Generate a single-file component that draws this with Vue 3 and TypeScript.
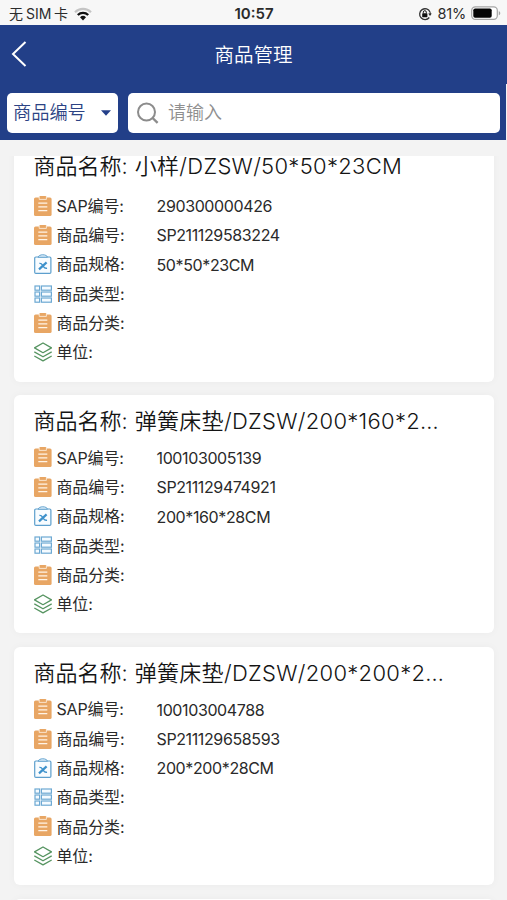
<script setup lang="ts">
import { ref } from 'vue'

type IconKind = 'clipboard' | 'spec' | 'grid' | 'layers'

interface Row {
  icon: IconKind
  label: string
  value: string
}

interface Product {
  name: string
  rows: Row[]
}

function makeProduct(name: string, sap: string, code: string, spec: string): Product {
  return {
    name,
    rows: [
      { icon: 'clipboard', label: 'SAP编号:', value: sap },
      { icon: 'clipboard', label: '商品编号:', value: code },
      { icon: 'spec', label: '商品规格:', value: spec },
      { icon: 'grid', label: '商品类型:', value: '' },
      { icon: 'clipboard', label: '商品分类:', value: '' },
      { icon: 'layers', label: '单位:', value: '' },
    ],
  }
}

const keyword = ref('')

const products: Product[] = [
  makeProduct('小样/DZSW/50*50*23CM', '290300000426', 'SP211129583224', '50*50*23CM'),
  makeProduct('弹簧床垫/DZSW/200*160*2…', '100103005139', 'SP211129474921', '200*160*28CM'),
  makeProduct('弹簧床垫/DZSW/200*200*2…', '100103004788', 'SP211129658593', '200*200*28CM'),
]
</script>

<template>
  <div class="phone">
    <div class="status">
      <div class="side">
        <span class="carrier">无<span class="sim">SIM</span>卡</span>
        <svg class="wifi" width="18" height="14" viewBox="0 0 18 14">
          <path d="M1 5.2a11.5 11.5 0 0 1 16 0" fill="none" stroke="#c4c4c4" stroke-width="2.2" />
          <path d="M3.8 8a7.4 7.4 0 0 1 10.4 0" fill="none" stroke="#111" stroke-width="2.3" />
          <path d="M6 10.3a4.3 4.3 0 0 1 6 0L9 13.4z" fill="#111" />
        </svg>
      </div>
      <span class="clock">10:57</span>
      <div class="side right">
        <svg width="14" height="14" viewBox="0 0 14 14">
          <path d="M11.3 10.5A5.4 5.4 0 1 1 12 5M12.2 5.2v2.6" fill="none" stroke="#333" stroke-width="1.3" />
          <path d="M10.2 6.6h3.6l-1.8 2.4z" fill="#333" />
          <rect x="4.2" y="6.3" width="5.2" height="3.9" rx=".6" fill="#111" />
          <path d="M5.3 6.4V5.2a1.5 1.5 0 0 1 3 0v1.2" fill="none" stroke="#111" stroke-width="1" />
        </svg>
        <span class="percent">81%</span>
        <svg width="30" height="15" viewBox="0 0 30 15">
          <rect x=".7" y=".8" width="25.6" height="12.6" rx="3.6" fill="#fff" stroke="#a5a5a5" stroke-width="1.2" />
          <rect x="2.3" y="2.4" width="18.4" height="9.4" rx="1.8" fill="#050505" />
          <path d="M27.8 5c2 .8 2 3.5 0 4.3z" fill="#a5a5a5" />
        </svg>
      </div>
    </div>

    <header class="nav">
      <svg class="back" width="16" height="26" viewBox="0 0 16 26">
        <path d="M14.5 1L2 13l12.5 12" fill="none" stroke="#fff" stroke-width="2" />
      </svg>
      <h1>商品管理</h1>
    </header>

    <div class="search">
      <div class="select">
        <span>商品编号</span>
        <svg width="10" height="6" viewBox="0 0 10 6"><path d="M0 .3h10L5 5.7z" fill="#24408a" /></svg>
      </div>
      <label class="field">
        <svg width="22" height="22" viewBox="0 0 22 22">
          <circle cx="9.5" cy="10" r="8.5" fill="none" stroke="#8c8c8c" stroke-width="2" />
          <path d="M15.6 16l5 4.8" stroke="#8c8c8c" stroke-width="2.4" />
        </svg>
        <input v-model="keyword" placeholder="请输入" />
      </label>
    </div>

    <main class="list">
      <article v-for="(product, i) in products" :key="i" class="card">
        <h2>
          <span>商品名称:</span>
          <span class="name">{{ product.name }}</span>
        </h2>
        <div v-for="(row, j) in product.rows" :key="j" class="row">
          <svg v-if="row.icon === 'clipboard'" class="icon" viewBox="0 0 18 20">
            <rect x="0" y="1.5" width="17.6" height="18.5" rx="1.6" fill="#e8a664" />
            <path d="M5.2 0v3.4h7.2V0" fill="#e8a664" stroke="#fff3e4" stroke-width=".8" />
            <path d="M4.3 7.2h9M4.3 10.9h9M4.3 14.6h9" stroke="#fff4e6" stroke-width="1.3" />
          </svg>
          <svg v-else-if="row.icon === 'spec'" class="icon" viewBox="0 0 18 20">
            <rect x=".7" y="3" width="16.2" height="16.4" rx="1.2" fill="#f8fcff" stroke="#5d9fcd" stroke-width="1.2" />
            <path d="M4 3.2C4.6 1.7 6.4.8 8.8.8s4.2.9 4.8 2.4z" fill="#e7f4fc" stroke="#5d9fcd" stroke-width="1" />
            <path d="M5 15.4l7.6-7" stroke="#3d91cb" stroke-width="2.2" />
            <path d="M5.4 9.4c2.400-.4 2.600 1.200 3.600 2.600s1.800 2.800 4 2.200" fill="none" stroke="#3d91cb" stroke-width="1.400" />
          </svg>
          <svg v-else-if="row.icon === 'grid'" class="icon" viewBox="0 0 18 20">
            <g fill="#f5fbff" stroke="#6da9d3" stroke-width="1.2">
              <rect x="1" y="2" width="4.6" height="4.2" />
              <rect x="7.4" y="2" width="10" height="4.2" />
              <rect x="1" y="8" width="4.6" height="4.2" />
              <rect x="7.4" y="8" width="10" height="4.2" />
              <rect x="1" y="14" width="4.6" height="4.2" />
              <rect x="7.4" y="14" width="10" height="4.2" />
            </g>
          </svg>
          <svg v-else class="icon" viewBox="0 0 18 20">
            <g fill="none" stroke="#569461" stroke-width="1.3" stroke-linejoin="round">
              <path d="M9 1l8.5 4.9L9 10.7.5 5.9z" />
              <path d="M.3 9.9L9 14.8l8.7-4.9M.3 14L9 18.9l8.7-4.9" />
            </g>
          </svg>
          <span class="label">{{ row.label }}</span>
          <span class="value">{{ row.value }}</span>
        </div>
      </article>
      <article class="card"></article>
    </main>
  </div>
</template>

<style>
body {
  margin: 0;
  background: #f4f4f4;
}
</style>

<style scoped>
.phone {
  display: flex;
  flex-direction: column;
  width: 507px;
  height: 900px;
  overflow: hidden;
  background: #f3f3f3;
  color: #2a2a2a;
  font-family: Inter, 'Noto Sans CJK SC', sans-serif;
}
.status {
  display: grid;
  grid-template-columns: 1fr auto 1fr;
  align-items: center;
  flex: none;
  height: 25px;
  padding: 2px 6px 0 9px;
  box-sizing: border-box;
  background: #f7f7f7;
  color: #2b2b2b;
  font-size: 14px;
}
.side {
  display: flex;
  align-items: center;
  gap: 6px;
}
.right {
  justify-content: flex-end;
  gap: 5px;
}
.carrier {
  line-height: 20px;
}
.sim {
  margin: 0 2.5px 0 3px;
}
.clock {
  margin-right: 2px;
  font-size: 15px;
  font-weight: 600;
}
.percent {
  font-size: 14.5px;
  letter-spacing: -0.2px;
}
.nav {
  display: grid;
  grid-template-columns: 16px 1fr 16px;
  align-items: center;
  flex: none;
  height: 59px;
  padding: 0 11px;
  box-sizing: border-box;
  background: #223f88;
}
.back {
  margin-top: -2px;
}
h1 {
  margin: 0;
  color: #fff;
  font-size: 19.5px;
  font-weight: 350;
  line-height: 28px;
  text-align: center;
}
.search {
  display: flex;
  gap: 10px;
  flex: none;
  width: 506px;
  height: 56px;
  padding: 8.5px 6px 7px 7px;
  box-sizing: border-box;
  background: #223f88;
}
.select,
.field {
  display: flex;
  align-items: center;
  height: 40.5px;
  box-sizing: border-box;
  border-radius: 5px;
  background: #fff;
}
.select {
  justify-content: space-between;
  width: 111px;
  padding: 0 7px 2px 6px;
  color: #2c4384;
  font-size: 18.2px;
  font-weight: 350;
}
.select span {
  margin-top: -1px;
}
.select svg {
  margin-top: 3px;
}
.field {
  flex: 1;
  gap: 9px;
  padding: 0 9px;
}
input {
  flex: 1;
  min-width: 0;
  padding: 0;
  border: 0;
  outline: 0;
  background: transparent;
  color: #333;
  font: 350 18px Inter, 'Noto Sans CJK SC', sans-serif;
}
input::placeholder {
  color: #8f8f8f;
}
.list {
  flex: 1;
  margin-top: 15.5px;
  overflow: hidden;
}
.card {
  height: 238px;
  margin: 0 13px 13.8px 14px;
  padding: 11px 20px 0;
  box-sizing: border-box;
  border-radius: 6px;
  background: #fff;
  box-shadow: 0 0 8px rgba(0, 0, 0, 0.035);
}
.card:first-child {
  margin-top: -12px;
  padding-top: 7.5px;
}
.card:first-child h2 {
  margin-bottom: 9.5px;
}
h2 {
  display: flex;
  gap: 7px;
  margin: 0 0 6px;
  color: #141414;
  font-size: 22px;
  font-weight: 350;
  line-height: 31px;
  white-space: nowrap;
}
h2 span:first-child {
  margin-left: -0.5px;
}
.name {
  letter-spacing: 0.3px;
}
.row {
  display: flex;
  align-items: center;
  height: 29.3px;
  font-size: 16px;
  line-height: 24px;
  white-space: nowrap;
}
.icon {
  flex: none;
  width: 18px;
  height: 20px;
  margin-left: -0.5px;
  margin-top: -1px;
}
.label {
  width: 100px;
  margin: -0.5px 0 0 5px;
  letter-spacing: -0.15px;
}
.value {
  letter-spacing: -0.38px;
}
</style>
